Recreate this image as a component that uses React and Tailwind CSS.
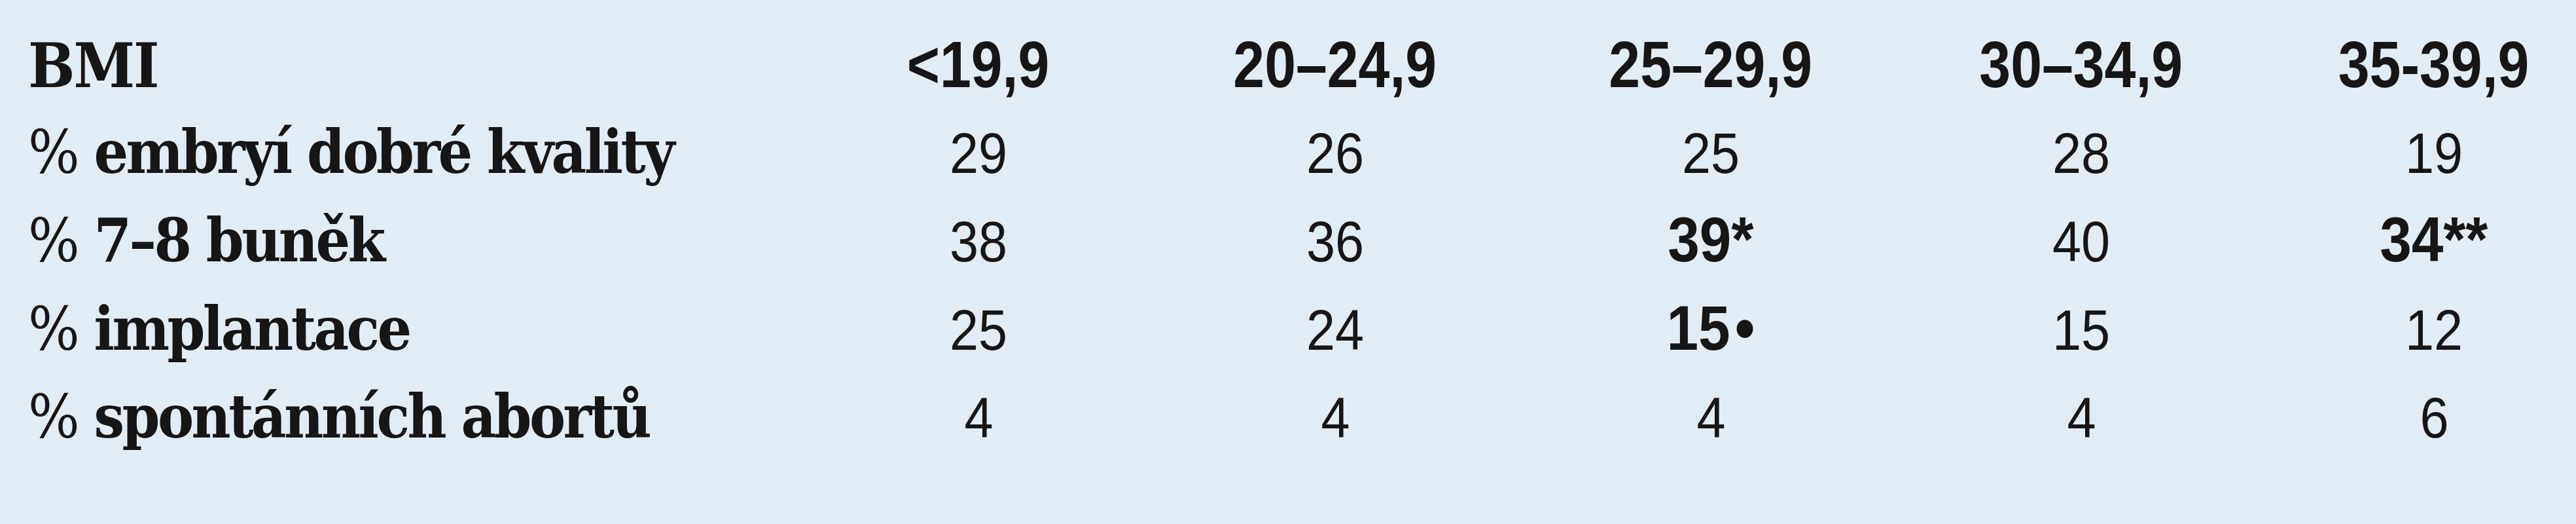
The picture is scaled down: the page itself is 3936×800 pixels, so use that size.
import React from 'react';

const cols = ['<19,9', '20–24,9', '25–29,9', '30–34,9', '35-39,9'];

const rows = [
    { label: 'embryí dobré kvality', values: ['29', '26', '25', '28', '19'] },
    { label: '7–8 buněk', values: ['38', '36', { v: '39*', b: true }, '40', { v: '34**', b: true }] },
    { label: 'implantace', values: ['25', '24', { v: '15', dot: true, b: true }, '15', '12'] },
    { label: 'spontánních abortů', values: ['4', '4', '4', '4', '6'] },
];

// column widths chosen so the cell centres sit under the headers
const widths = ['w-[526px]', 'w-[564px]', 'w-[584px]', 'w-[548px]', 'w-[530px]'];

const serif = 'font-["DejaVu_Serif_Condensed","DejaVu_Serif","Liberation_Serif",serif]';
const sans = 'font-["Liberation_Sans_Narrow","Liberation_Sans",sans-serif]';

const Cell = ({ item, i }) => {
    const val = typeof item === 'string' ? { v: item } : item;
    return (
        <div
            className={`${widths[i]} shrink-0 text-center ${sans} leading-[132px] ${val.b ? 'text-[97px] font-bold' : 'text-[88px] font-normal'}`}
        >
            <span className="inline-block scale-x-[0.9]">
                {val.v}
                {val.dot && <span className="ml-2">•</span>}
            </span>
        </div>
    );
};

const App = () => {
    return (
        <div className="w-full h-[800px] overflow-hidden bg-[#e1ecf5] text-[#161616]">
            <div className="pt-[32px] pl-[43px]">
                {/* hlavička */}
                <div className="flex items-baseline">
                    <div className={`w-[1189px] shrink-0 ${serif} font-bold text-[94px] leading-[132px] tracking-[-2px]`}>BMI</div>
                    {cols.map((c, i) => (
                        <div key={c} className={`${widths[i]} shrink-0 text-center ${sans} text-[100px] font-bold leading-[132px]`}>
                            <span className="inline-block scale-x-[0.86]">{c}</span>
                        </div>
                    ))}
                </div>

                {rows.map((r) => (
                    <div key={r.label} className="flex items-baseline">
                        <div className={`w-[1189px] shrink-0 ${serif} font-bold text-[92px] leading-[132px] tracking-[-3.5px]`}>
                            <span className="font-normal">%</span> {r.label}
                        </div>
                        {r.values.map((v, i) => (
                            <Cell key={i} item={v} i={i} />
                        ))}
                    </div>
                ))}
            </div>
        </div>
    );
};

export default App;
